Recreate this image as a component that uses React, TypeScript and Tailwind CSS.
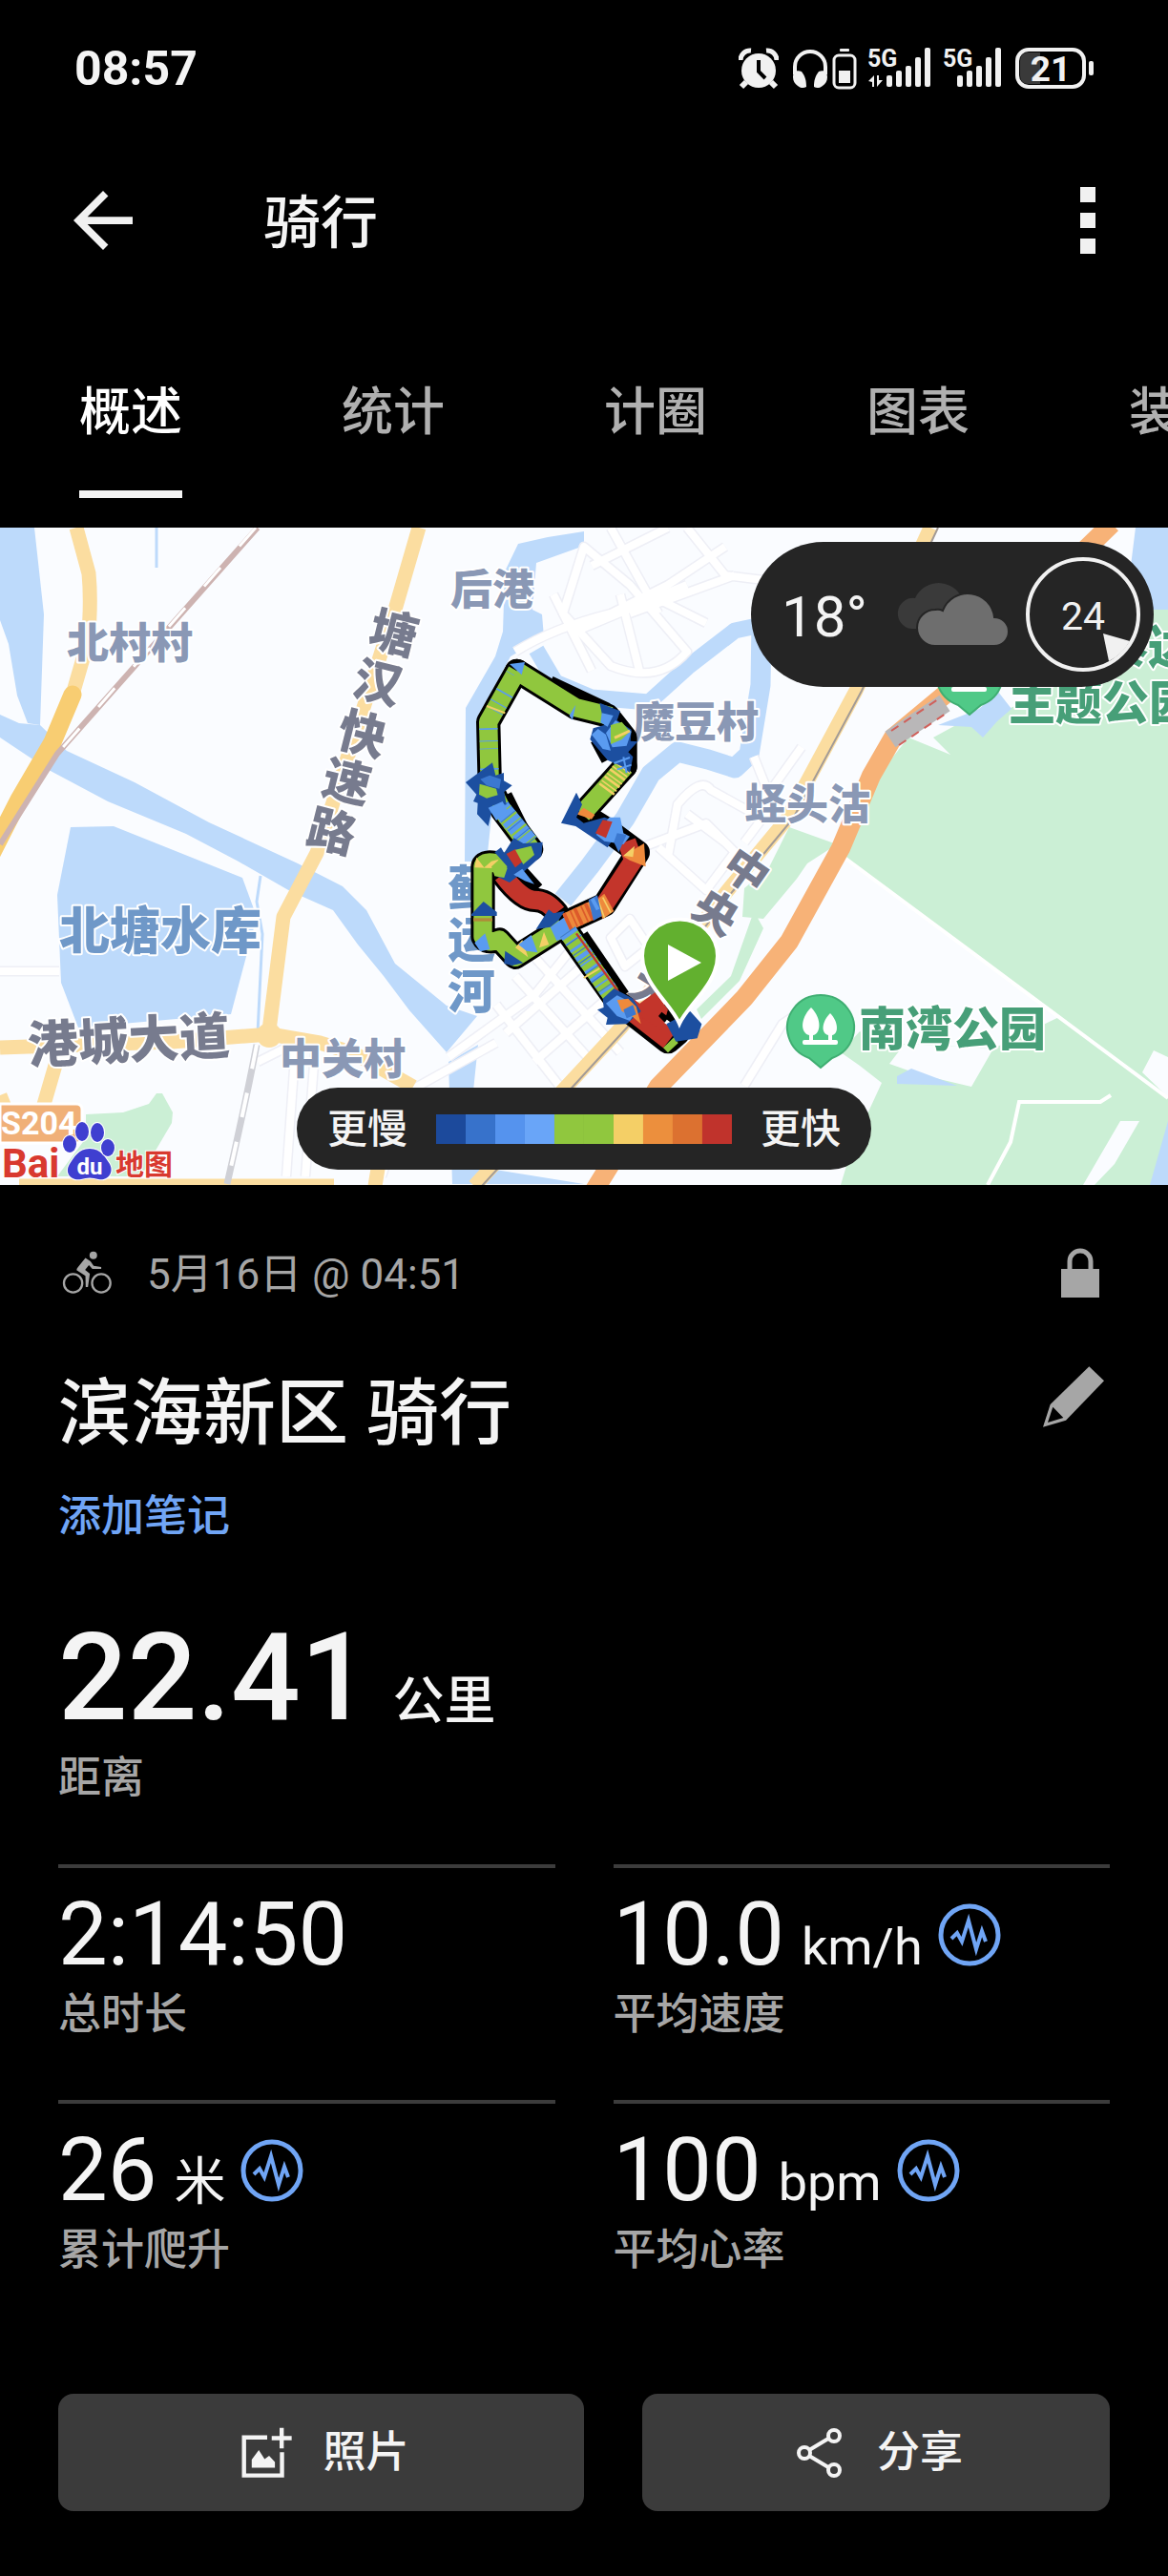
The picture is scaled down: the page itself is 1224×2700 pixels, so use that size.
import type { ReactNode } from "react"

const GREEN = "#90c73e"
const RED = "#c3352b"
const NAVY = "#1c4fa0"
const BLUE = "#3b78d0"
const SKY = "#5a9bf0"
const YELLOW = "#f4cf66"
const ORANGE = "#ee8a3c"

const tabs = ["概述", "统计", "计圈", "图表", "装备"]

const speedColors = [
  "#1c4a9c",
  "#3772cb",
  "#5593ee",
  "#69a5f8",
  "#90c73e",
  "#90c73e",
  "#f4cf66",
  "#ec8f3d",
  "#dc7130",
  "#c0332c",
]

interface Stat {
  value: string
  unit?: string
  label: string
  chart?: boolean
}

const stats: Stat[] = [
  { value: "2:14:50", label: "总时长" },
  { value: "10.0", unit: "km/h", label: "平均速度", chart: true },
  { value: "26", unit: "米", label: "累计爬升", chart: true },
  { value: "100", unit: "bpm", label: "平均心率", chart: true },
]

function SignalBars() {
  return (
    <>
      <rect x="19" y="29" width="6" height="12" rx="2" />
      <rect x="29" y="24" width="6" height="17" rx="2" />
      <rect x="39" y="19" width="6" height="22" rx="2" />
      <rect x="49" y="10" width="6" height="31" rx="2" />
      <rect x="59" y="0" width="6" height="41" rx="2" />
    </>
  )
}

function StatusBar() {
  return (
    <div className="flex h-36 items-center justify-between pr-[76px] pl-[78px]">
      <span className="text-[50px] leading-none font-bold">08:57</span>
      <div className="flex items-center fill-[#f1f1f1]">
        <svg viewBox="0 0 42 44" className="h-11 w-[42px]" aria-hidden="true">
          <path d="M2 13A10 10 0 0 1 13 3M40 13A10 10 0 0 0 29 3" stroke="#f1f1f1" strokeWidth="5" fill="none" />
          <path d="M8 36l-5 5M34 36l5 5" stroke="#f1f1f1" strokeWidth="6" />
          <circle cx="21" cy="24" r="18" />
          <path d="M21 13v12l7 7" stroke="#000" strokeWidth="4" fill="none" />
        </svg>
        <svg viewBox="0 0 38 44" className="ml-3.5 h-11 w-[38px]" aria-hidden="true">
          <path d="M3 28V20a16 16 0 0 1 32 0v8" stroke="#f1f1f1" strokeWidth="4" fill="none" />
          <path d="M1 31c0-6 4-8 9-6 4 5 5 10 5 16-3 2-7 1-9-1-3-2-5-5-5-9zM37 31c0-6-4-8-9-6-4 5-5 10-5 16 3 2 7 1 9-1 3-2 5-5 5-9z" />
        </svg>
        <svg viewBox="0 0 26 44" className="ml-1 h-11 w-[26px]" aria-hidden="true">
          <rect x="8" y="1" width="10" height="3" rx="1" />
          <rect x="2" y="8" width="22" height="34" rx="5" stroke="#f1f1f1" strokeWidth="3" fill="none" />
          <rect x="7" y="24" width="12" height="13" />
        </svg>
        <svg viewBox="0 0 66 44" className="ml-3 h-11 w-[66px]" aria-hidden="true">
          <text x="-1" y="20" fontSize="25" fontWeight="700">5G</text>
          <path d="M0 35l6-6v12H4v-5zM15 34l-6 7V29h2v5z" />
          <SignalBars />
        </svg>
        <svg viewBox="0 0 66 44" className="ml-2 h-11 w-[66px]" aria-hidden="true">
          <text x="4" y="20" fontSize="25" fontWeight="700">5G</text>
          <SignalBars />
        </svg>
        <svg viewBox="0 0 84 44" className="ml-3.5 h-11 w-[84px]" aria-label="电量 21%">
          <path d="M14 5h12v33H14q-9 0-9-9V14q0-9 9-9z" fill="#3a3a3a" />
          <rect x="2" y="2" width="70" height="39" rx="12" stroke="#f1f1f1" strokeWidth="4" fill="none" />
          <rect x="77" y="14" width="5" height="15" rx="2" />
          <text x="37" y="35" fontSize="37" fontWeight="700" textAnchor="middle">21</text>
        </svg>
      </div>
    </div>
  )
}

function TopBar() {
  return (
    <header className="flex h-[174px] items-center pr-[76px] pl-[77px]">
      <button type="button" aria-label="返回">
        <svg viewBox="4 4 16 16" className="size-[62px] fill-[#f1f1f1]">
          <path d="M20 11H7.8l5.6-5.6L12 4l-8 8 8 8 1.4-1.4L7.8 13H20z" />
        </svg>
      </button>
      <h1 className="ml-[137px] flex-1 pt-2 text-6xl leading-none font-medium">骑行</h1>
      <button type="button" aria-label="更多" className="flex flex-col gap-[11px]">
        <span className="size-4 bg-[#f1f1f1]" />
        <span className="size-4 bg-[#f1f1f1]" />
        <span className="size-4 bg-[#f1f1f1]" />
      </button>
    </header>
  )
}

function TabBar() {
  return (
    <nav className="mb-[31px] flex gap-[167px] overflow-hidden pl-[83px]">
      {tabs.map((tab, i) => (
        <button
          key={tab}
          type="button"
          aria-current={i === 0 ? "page" : undefined}
          className={
            i === 0
              ? "h-[204px] shrink-0 border-b-8 border-[#f4f4f4] pt-8 text-[54px] font-medium text-white"
              : "h-[204px] shrink-0 border-b-8 border-transparent pt-8 text-[54px] font-medium text-[#b0b0b0]"
          }
        >
          {tab}
        </button>
      ))}
    </nav>
  )
}

// one stretch of the track, in route units
function Leg({ d, color, dash, width = 58 }: { d: string; color: string; dash?: string; width?: number }) {
  return <path d={d} stroke={color} strokeWidth={width} strokeDasharray={dash} />
}

function Route() {
  const west = "M290 690L200 570L160 490L155 290L245 130"
  const north = "M245 130L430 245L530 270L585 340L585 430"
  const east = "M585 430L450 580L530 630L625 700L520 865L400 920"
  const southWest = "M240 735L200 740Q142 722 138 745V965Q150 990 190 975L240 1030L390 935"
  const south = "M390 930L560 1170L720 1295L750 1270"
  const middle = "M200 770Q260 850 300 850T370 890"
  return (
    <g transform="translate(460 107) scale(.33333)" fill="none" strokeLinejoin="round">
      <g stroke="#000" strokeWidth="76" strokeLinecap="round">
        <path d={west} />
        <path d={north} />
        <path d={east} />
        <path d={southWest} />
        <path d={south} />
        <path d={middle} />
      </g>
      <path d="M210 520L290 680M350 165L530 250M450 960L580 1150M260 760L310 815M495 345L530 410M700 1190L770 1240" stroke="#000" strokeWidth="40" />

      <Leg d={west} color={GREEN} />
      <Leg d={west} color={SKY} dash="3 34 5 60 2 22" />
      <Leg d="M150 240L208 262" color={YELLOW} width={6} />
      <Leg d="M285 670L195 560" color={SKY} />
      <Leg d="M285 670L195 560" color={GREEN} dash="7 21 4 17" />
      <Leg d="M285 670L195 560" color={BLUE} dash="3 32" />
      <Leg d="M245 130L430 245L540 272" color={GREEN} />
      <path d="M222 108L270 102L260 142zM410 270L430 236L420 284z" fill={SKY} />

      <Leg d={middle} color={RED} />
      <Leg d={southWest} color={GREEN} />
      <path d="M112 748L118 716L142 748L165 728L188 722L176 750zM240 1000L262 975L280 1030zM315 1000L330 950L346 990z" fill={YELLOW} />
      <path d="M108 912H168" stroke="#b08a38" strokeWidth="10" />
      <path d="M102 895L140 855L182 888V900H102zM205 1050L208 1010L265 1048L230 1056z" fill={NAVY} />
      <path d="M112 985L145 955L160 1005L130 1012zM250 990L290 960L310 1015L275 1010zM350 935L400 900L425 960L370 978z" fill={SKY} />

      <Leg d="M400 920L520 865" color={ORANGE} />
      <Leg d="M400 920L520 865" color="#dc5a2b" dash="11 13 5 8" />
      <Leg d="M520 865L615 720" color={RED} />
      <path d="M490 855L520 830L550 885L515 910z" fill={ORANGE} />
      <path d="M500 850L520 905M515 842L540 890" stroke={YELLOW} strokeWidth="5" />
      <path d="M470 850L498 835L512 900L486 915z" fill={BLUE} />
      <path d="M482 846L500 880" stroke={SKY} strokeWidth="12" />
      <Leg d="M615 735L590 665" color={RED} />
      <path d="M578 712L645 672L650 745L600 725z" fill={ORANGE} />
      <path d="M580 710L615 680L610 715z" fill={YELLOW} />

      <Leg d="M585 430L450 580" color={GREEN} />
      <Leg d="M580 430L525 505" color={YELLOW} dash="8 9 5 6" />
      <path d="M432 580L455 560L490 582L480 596z" fill={ORANGE} />
      <path d="M432 512L450 550L432 590L455 608L520 590L550 600L560 640L530 685L430 618L384 608z" fill={NAVY} />
      <path d="M495 645L535 590H570L580 640L600 650L580 675L520 665z" fill={SKY} />
      <path d="M492 640L515 598L545 604L525 655z" fill={RED} />
      <path d="M560 640L590 645L565 700L550 668z" fill={BLUE} />

      <path d="M505 230L570 256L560 285L605 315L602 350L625 352L595 385L610 400L600 450L575 430L530 410L475 345L485 310L520 300z" fill={NAVY} />
      <path d="M480 330L500 312L525 330L540 380L515 375zM512 262L548 270L530 305L508 292zM525 325L555 285L605 320L590 365L545 370z" fill={SKY} />
      <path d="M540 300L575 290L600 320L575 345L540 360z" fill={GREEN} />
      <path d="M552 340L600 318" stroke={YELLOW} strokeWidth="9" />
      <path d="M550 420L600 402M560 440L605 425M580 400L590 450" stroke={SKY} strokeWidth="6" />

      <path d="M84 480L168 418L178 458L204 450V475L230 490L205 510L212 550L170 552L155 618L120 580L122 545L108 540L118 518z" fill={NAVY} />
      <path d="M130 470L160 458L195 470L190 500L150 490z" fill={BLUE} />
      <path d="M128 485L180 500L185 520L150 530L126 518z" fill={GREEN} />
      <path d="M155 560L200 540L215 570L180 600z" fill={SKY} />
      <path d="M235 655L265 672L326 668L322 712L270 758L222 795L180 775L215 745L175 700L195 685L205 702z" fill={NAVY} />
      <path d="M212 705L240 690L262 730L240 748z" fill={RED} />
      <path d="M240 692L290 680L300 708L265 738z" fill={GREEN} />
      <path d="M165 745L190 722L215 750L205 780L175 775z" fill={GREEN} />
      <path d="M235 770L262 752L300 800L270 790z" fill={SKY} />
      <path d="M305 942L345 880L360 892L395 885L375 915L350 935z" fill={NAVY} />

      <Leg d="M405 950L540 1145" color={GREEN} />
      <Leg d="M405 950L540 1145" color={SKY} dash="14 15 5 18 9 20" />
      <Leg d="M405 950L540 1145" color={BLUE} dash="3 28 4 35" />
      <path d="M432 955L565 1140" stroke={RED} strokeWidth="7" />
      <path d="M455 1095L505 1065" stroke={YELLOW} strokeWidth="6" />
      <Leg d="M590 1185L725 1290" color={RED} width={64} />
      <path d="M625 1180L680 1140L720 1195L700 1260L640 1220z" fill={RED} />
      <path d="M515 1160L550 1128L610 1160L635 1200L590 1240L525 1242L530 1220L498 1195L518 1188z" fill={NAVY} />
      <path d="M525 1175L560 1150L600 1170L620 1200L600 1230L560 1215z" fill={SKY} />
      <path d="M560 1165L595 1160L620 1185L635 1240L600 1210L575 1200z" fill={ORANGE} />
      <path d="M580 1195L610 1180L620 1210L590 1222z" fill={BLUE} />
      <path d="M705 1315L740 1280L752 1300L720 1330z" fill={GREEN} />
      <path d="M690 1215L700 1202L722 1218L710 1235z" fill="#000" />
      <path d="M715 1240L790 1200L826 1240L812 1285L745 1295z" fill={NAVY} />
    </g>
  )
}

function ParkPin({ x, y }: { x: number; y: number }) {
  return (
    <g transform={`translate(${x} ${y})`}>
      <path d="M0 43L-12 33A35 34 0 1 1 12 33z" fill="#50c987" stroke="#3fae72" strokeWidth="2" />
      <g fill="#fff">
        <path d="M-10-20c12 12 10 28 2 29v6h-4V9c-9-2-10-17 2-29zM10-14c9 9 9 22 2 23v6H8V9C0 7 1-5 10-14z" />
        <rect x="-19" y="14" width="37" height="5" rx="2" />
      </g>
    </g>
  )
}

function MapLabel({ x, y, size = 44, color = "#8a98b5", angle = 0, children }: {
  x: number
  y: number
  size?: number
  color?: string
  angle?: number
  children: ReactNode
}) {
  return (
    <text
      transform={`translate(${x} ${y}) rotate(${angle})`}
      fontSize={size}
      fontWeight="900"
      fill={color}
      stroke="#fff"
      strokeWidth="4"
      strokeLinejoin="round"
      paintOrder="stroke"
    >
      {children}
    </text>
  )
}

const streets = [
  // blocks north of the river
  "M540 130Q580 105 640 90L700 60L760 20",
  "M612 20L660 60L720 130Q690 165 640 145L590 90Z",
  "M580 70L620 150M620 40L700 0M660 90L770 50M640 0L690 90M720 0L760 50L800 55",
  "M690 75L740 100M650 70L670 150M600 110L720 60",
  // east bank
  "M700 345L710 290Q735 260 745 275L790 300L840 230",
  "M660 340L740 310L770 340L740 380L690 335M720 300L760 330M790 240L810 290L780 330",
  "M640 430L660 410L680 440L655 460Z",
  // south blocks
  "M470 555L560 490L600 440M430 590L520 540",
  "M540 470L620 560M560 450L650 550M520 500L590 590M530 530L610 460M560 560L640 490",
  "M270 560L310 540L300 680M330 550L320 680M430 590L400 680",
  "M0 465H62M780 585L820 520L850 500",
]

const expressway: [string, number, number][] = [
  ["塘", 384, 122],
  ["汉", 367, 174],
  ["快", 351, 228],
  ["速", 335, 278],
  ["路", 319, 330],
]

function TrackMap() {
  return (
    <svg viewBox="0 0 1224 689" preserveAspectRatio="xMidYMid slice" className="size-full" role="img" aria-label="骑行路线">
      <rect width="1224" height="689" fill="#fafcff" />

      <g fill="#cbefd5">
        <path d="M1224 86V595L881 343L903 287L920 260L952 220L996 238L978 220L1000 208L1057 190L1120 160L1180 86z" />
        <path d="M901 528L920 540L948 541L1041 546L1112 512L1224 591V689H881L893 649L924 582L901 564L881 550z" />
        <path d="M90 615L129 613L156 604L164 593H170L181 613L180 624L160 658L148 680H60L90 640z" />
        <path d="M827 314L877 332L846 352L835 368L800 410L778 408L780 378L806 356zM766 470L790 402L800 420L775 475L735 515L730 505z" />
      </g>
      <g fill="#bddafb">
        <path d="M0 0H36L46 91L42 207L29 205L18 176L9 122L0 97z" />
        <path d="M0 196L20 205L42 207L70 234L141 267L219 309L312 352L359 376L384 401L414 457L468 501L500 512L468 550L429 506L402 470L375 437L349 401L304 381L250 350L195 321L113 287L51 254L0 220z" />
        <path d="M74 314L119 313L254 367L269 408L242 510L82 524L64 477L60 385z" />
        <path d="M612 4L574 10L543 17L529 46L527 109L519 135L488 189L487 350L510 350L520 256L504 193L535 135L570 115L568 91L558 86L562 37L612 19z" />
        <path d="M470 560L501 542L495 600L519 673L612 688H474z" />
        <path d="M1190 0H1224V86H1207L1185 40zM983 207L1026 190L1046 172L1060 190L1045 203L1030 220L1018 209zM1224 622V689H1205z" />
      </g>
      <g fill="none" stroke="#bddafb" strokeLinejoin="round">
        <path d="M562 128L582 162L620 178L680 183L722 145L770 108L798 102" strokeWidth="17" />
        <path d="M798 98L797 165L785 238L770 252L742 243L710 235L682 258L655 305L618 355L590 390" strokeWidth="21" />
        <path d="M164 0V42M273 365L269 392L275 426L270 530" strokeWidth="3" />
      </g>
      <path d="M932 562L948 541L1041 546L1018 586L963 573zM1209 548L1224 555V597L1197 571zM1174 622L1194 622L1168 667L1147 689H1135z" fill="#fafcff" />
      <path d="M940 575L955 567L1003 585L940 583z" fill="#bddafb" />
      <path d="M881 343L1224 598M1164 595L1153 602H1068L1059 644L1035 689" fill="none" stroke="#fff" strokeWidth="4" />

      <g fill="none" strokeLinejoin="round">
        {streets.map((d) => (
          <path key={d} d={d} stroke="#eeeff6" strokeWidth="11" />
        ))}
        {streets.map((d) => (
          <path key={d} d={d} stroke="#fff" strokeWidth="8" />
        ))}
      </g>

      <g fill="none" stroke="#fbdda0" strokeWidth="15" strokeLinejoin="round">
        <path d="M0 545L180 539L283 531L335 540L371 551L433 586M59 560L45 608M0 595L10 620M20 690H350M398 660L393 690" />
        <path d="M80 0L93 48Q96 80 92 120L76 175" />
        <path d="M439 0L414 86L332 341L297 408L281 535" />
        <path d="M975 0L897 171L825 305L762 381L651 524L497 690" />
      </g>
      <circle cx="282" cy="532" r="13" fill="#fbdda0" />
      <path d="M983 0L903 171L831 305L768 381L657 524L505 690" fill="none" stroke="#a39b96" strokeWidth="2" />
      <path d="M76 175L55 225L20 285L-8 340" fill="none" stroke="#f8cd72" strokeWidth="19" strokeLinecap="round" />
      <path d="M270 0L60 237L0 332" fill="none" stroke="#cdb3b1" strokeWidth="6" />
      <path d="M268 0L60 237" fill="none" stroke="#fff" strokeWidth="3" strokeDasharray="26 30" />
      <path d="M269 542Q258 600 238 688" fill="none" stroke="#cfd0d6" strokeWidth="7" />
      <path d="M269 542Q258 600 238 688" fill="none" stroke="#fff" strokeWidth="4" strokeDasharray="26 26" />
      <path d="M1165 -4L1120 40L995 171L936 220L913 260L881 336L827 434L780 493L690 586L622 696" fill="none" stroke="#f7b277" strokeWidth="20" strokeLinejoin="round" />
      <path d="M933 222L990 184" stroke="#b9b7b8" strokeWidth="20" />
      <path d="M934 213L986 178M942 228L994 193" stroke="#d0605a" strokeWidth="2" strokeDasharray="9 7" />

      <MapLabel x={70} y={137}>北村村</MapLabel>
      <MapLabel x={472} y={81}>后港</MapLabel>
      <MapLabel x={293} y={573}>中关村</MapLabel>
      <MapLabel x={663} y={220}>魔豆村</MapLabel>
      <MapLabel x={780} y={306}>蛏头沽</MapLabel>
      <MapLabel x={62} y={442} size={53} color="#6f98c8">北塘水库</MapLabel>
      <MapLabel x={30} y={562} size={53} color="#777b8e" angle={-3}>港城大道</MapLabel>
      {expressway.map(([char, x, y]) => (
        <MapLabel key={char} x={x} y={y} size={50} color="#777b8e" angle={14}>{char}</MapLabel>
      ))}
      <MapLabel x={469} y={396} size={50} color="#6f98c8">蓟</MapLabel>
      <MapLabel x={469} y={450} size={50} color="#6f98c8">运</MapLabel>
      <MapLabel x={469} y={504} size={50} color="#6f98c8">河</MapLabel>
      <MapLabel x={754} y={360} size={46} color="#777b8e" angle={35}>中</MapLabel>
      <MapLabel x={722} y={405} size={46} color="#777b8e" angle={32}>央</MapLabel>
      <MapLabel x={655} y={488} size={46} color="#777b8e" angle={32}>大</MapLabel>

      <ParkPin x={1016} y={153} />
      <MapLabel x={1154} y={143} size={49} color="#479f78">泰达</MapLabel>
      <MapLabel x={1057} y={201} size={49} color="#479f78">主题公园</MapLabel>
      <ParkPin x={860} y={523} />
      <MapLabel x={900} y={543} size={49} color="#479f78">南湾公园</MapLabel>

      <Route />
      <path d="M712 520C704 500 673 478 673 449A39 38 0 0 1 752 449C752 478 721 500 712 520z" fill="#62b02f" stroke="#fff" strokeWidth="4" />
      <path d="M700 437V475L735 456z" fill="#fff" />

      <path d="M0 604H80Q86 604 86 610V640Q86 645 80 645H0z" fill="#f0b078" stroke="#fff" strokeWidth="3" />
      <text x="1" y="636" fontSize="34" fontWeight="700" fill="#fff">S204</text>
      <g stroke="#fff" strokeWidth="2" paintOrder="stroke" fontWeight="700">
        <text x="2" y="681" fontSize="42" fill="#d8392f">Bai</text>
        <text x="121" y="678" fontSize="30" fill="#d8392f">地图</text>
        <g fill="#3f3fd0">
          <path d="M94 651C106 651 110 660 115 667C120 677 112 685 103 683Q94 680 85 683C75 685 67 677 73 667C78 660 82 651 94 651z" />
          <ellipse cx="73" cy="646" rx="7" ry="9" />
          <ellipse cx="86" cy="633" rx="7" ry="10" />
          <ellipse cx="102" cy="634" rx="7" ry="10" />
          <ellipse cx="113" cy="650" rx="7" ry="9" />
        </g>
        <text x="94" y="678" fontSize="24" fill="#fff" stroke="none" textAnchor="middle">du</text>
      </g>
    </svg>
  )
}

function Weather() {
  return (
    <div className="absolute top-[15px] right-[15px] flex h-[152px] w-[422px] items-center justify-between rounded-full bg-[#252525] pr-[14px] pl-8">
      <span className="pt-1.5 text-6xl leading-none">18°</span>
      <svg viewBox="0 0 120 67" className="ml-3 h-[67px] w-[120px]" aria-label="多云">
        <path d="M17 48A16 16 0 0 1 21 16A27 27 0 0 1 68 12L60 48z" fill="#3a3a3a" />
        <path
          d="M42 66A19 19 0 0 1 42 28Q46 27 50 29A28 28 0 0 1 104 36A15 15 0 0 1 104 66z"
          fill="#6e6e6e"
          stroke="#252525"
          strokeWidth="2"
        />
      </svg>
      <svg viewBox="0 0 120 120" className="size-[120px]" aria-label="风速 24">
        <circle cx="60" cy="60" r="58" fill="none" stroke="#f1f1f1" strokeWidth="4" />
        <path d="M81 80L109 88Q101 102 87 109z" fill="#f1f1f1" />
        <text x="60" y="76" fontSize="41" fill="#f1f1f1" textAnchor="middle">24</text>
      </svg>
    </div>
  )
}

function SpeedLegend() {
  return (
    <div className="absolute bottom-4 left-1/2 flex h-[86px] -translate-x-1/2 items-center gap-[30px] rounded-full bg-[#252525] px-8 text-[42px] font-medium whitespace-nowrap">
      <span>更慢</span>
      <div className="flex">
        {speedColors.map((color, i) => (
          <span key={i} className="size-[31px]" style={{ backgroundColor: color }} />
        ))}
      </div>
      <span>更快</span>
    </div>
  )
}

function StatCell({ value, unit, label, chart }: Stat) {
  return (
    <div className="border-t-4 border-[#3c3c3c] pt-5 pb-[59px]">
      <div className="flex h-[100px] items-center gap-4">
        <p className="flex items-baseline gap-[18px] text-[92px] leading-[100px]">
          {value}
          {unit && <span className="text-[54px] leading-none">{unit}</span>}
        </p>
        {chart && (
          <button type="button" aria-label={`${label}图表`}>
            <svg viewBox="0 0 66 66" className="size-[66px] fill-none stroke-[#70a5f5]">
              <circle cx="33" cy="33" r="30" strokeWidth="5" />
              <path d="M14 37L20 31L25 40L32 18L40 48L46 29L50 40" strokeWidth="4" />
            </svg>
          </button>
        )}
      </div>
      <p className="mt-1 text-[45px] leading-[60px] font-medium text-[#a6a6a6]">{label}</p>
    </div>
  )
}

export default function App() {
  return (
    <div lang="zh-CN" className="min-h-screen bg-black font-['Roboto','Noto_Sans_CJK_SC',sans-serif] text-[#f4f4f4]">
      <StatusBar />
      <TopBar />
      <TabBar />

      <div className="relative h-[689px] overflow-hidden">
        <TrackMap />
        <Weather />
        <SpeedLegend />
      </div>

      <main className="px-[61px] pt-[62px] pb-[68px]">
        <div className="flex h-[60px] items-center text-[#a6a6a6]">
          <svg viewBox="30 33 160 138" className="ml-1 h-[46px] w-[53px]" aria-hidden="true">
            <circle cx="65" cy="135" r="29" fill="none" stroke="currentColor" strokeWidth="7" />
            <circle cx="154" cy="135" r="29" fill="none" stroke="currentColor" strokeWidth="7" />
            <circle cx="129" cy="47" r="12" fill="currentColor" />
            <path d="M104 55L120 66L130 80L154 84V90L126 90L115 78L103 93L118 105L112 147H105L104 112L76 94Q76 88 82 82z" fill="currentColor" />
          </svg>
          <p className="ml-9 flex-1 pt-1 text-[44px] leading-none">5月16日 @ 04:51</p>
          <button type="button" aria-label="隐私">
            <svg viewBox="0 0 40 52" className="mr-[11px] h-[52px] w-10">
              <path d="M9 24V14a11 11 0 0 1 22 0V24" fill="none" stroke="currentColor" strokeWidth="5" />
              <rect y="22" width="40" height="30" fill="currentColor" />
            </svg>
          </button>
        </div>

        <div className="mt-[68px] flex h-[100px] items-start justify-between">
          <h2 className="text-[76px] leading-[100px] font-medium">滨海新区 骑行</h2>
          <button type="button" aria-label="编辑" className="mr-1.5">
            <svg viewBox="98 431 192 190" className="size-16 fill-[#a6a6a6]">
              <path d="M243 431L290 476L170 600L98 621L121 550z" />
              <path d="M129 558L162 592L113 607z" fill="#000" />
            </svg>
          </button>
        </div>

        <a href="#notes" className="mt-7 block w-fit text-[45px] leading-[60px] font-medium text-[#70a5f5]">
          添加笔记
        </a>

        <p className="mt-[74px] flex h-32 items-baseline gap-6 text-[128px] leading-[128px] font-medium">
          22.41
          <span className="text-[54px] leading-none">公里</span>
        </p>
        <p className="mt-3 text-[45px] leading-[60px] font-medium text-[#a6a6a6]">距离</p>

        <div className="mt-[60px] grid grid-cols-2 gap-x-[61px]">
          {stats.map((stat) => (
            <StatCell key={stat.label} {...stat} />
          ))}
        </div>

        <div className="mt-[61px] grid h-[123px] grid-cols-[9fr_8fr] gap-[61px] text-[45px] font-medium">
          <button type="button" className="flex items-center justify-center gap-8 rounded-2xl bg-[#3b3b3b] pl-2">
            <svg viewBox="38 34 160 160" className="size-[54px]" aria-hidden="true">
              <path d="M118 66H46V184H164V112M163 36V100M132 68H194" fill="none" stroke="#f4f4f4" strokeWidth="13" />
              <path d="M70 160V135L92 105L110 133L124 123L142 142V160z" fill="#f4f4f4" />
            </svg>
            照片
          </button>
          <button type="button" className="flex items-center justify-center gap-9 rounded-2xl bg-[#3b3b3b] pl-2">
            <svg viewBox="0 0 48 52" className="h-[52px] w-12 fill-none stroke-[#f4f4f4]" aria-hidden="true">
              <path d="M13 23L33 11M13 29L33 41" strokeWidth="4" />
              <circle cx="39" cy="8" r="6" strokeWidth="4" />
              <circle cx="8" cy="26" r="6" strokeWidth="4" />
              <circle cx="39" cy="44" r="6" strokeWidth="4" />
            </svg>
            分享
          </button>
        </div>
      </main>
    </div>
  )
}
